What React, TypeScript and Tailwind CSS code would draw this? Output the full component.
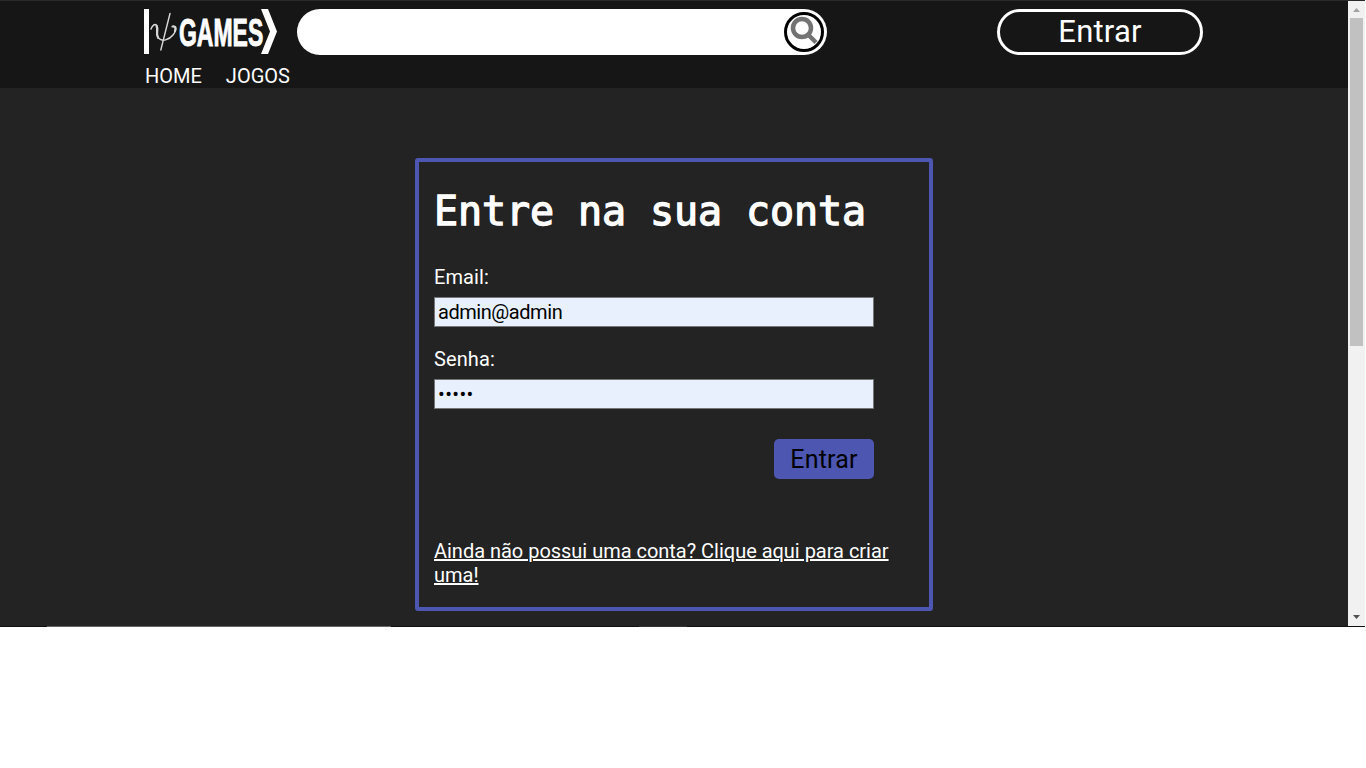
import React from "react";

function Logo() {
  return (
    <svg width="134" height="46" viewBox="0 0 134 46" className="block shrink-0 overflow-visible" aria-label="Psi Games">
      <rect x="0" y="0" width="5" height="45" fill="#fff" />
      <g fill="none" stroke="#d8d8d8" strokeLinecap="round">
        <path d="M7 20C8.500 16 11 14.500 12.800 16.500C15 19 11.500 25.500 14.500 29C18 33 25 31 29 26C31 23.500 32 20 31.500 18" strokeWidth="1.500" />
        <path d="M12.500 17C14.500 20 11.500 25 14 28.500M28.500 17.500C31.500 17 32 19 31 22" strokeWidth="2.200" />
        <path d="M26 4.500L16.800 41" strokeWidth="1.400" />
      </g>
      <text
        transform="translate(35 36.500) scale(0.605 1)"
        fill="#fff"
        stroke="#fff"
        strokeWidth="0.900"
        fontFamily="Liberation Sans, sans-serif"
        fontWeight="700"
        fontSize="38"
      >
        GAMES
      </text>
      <path d="M117 0H124L133 22.500L124 45H117L126 22.500Z" fill="#fff" />
    </svg>
  );
}

function SearchBar() {
  return (
    <div className="ml-[19px] flex h-[46px] w-[530px] items-center justify-end rounded-full bg-white pr-[3px]">
      <button className="flex size-10 items-center justify-center rounded-full border-[3px] border-black bg-white">
        <svg width="32" height="32" viewBox="0 0 32 32" fill="none" stroke="#737373">
          <circle cx="14" cy="12" r="9" strokeWidth="4.500" />
          <path d="M20 18.500L28 26.500" strokeWidth="4.500" />
        </svg>
      </button>
    </div>
  );
}

function Header() {
  return (
    <header className="h-[87px] bg-[#161616] pl-36 pt-2">
      <div className="flex items-start">
        <Logo />
        <SearchBar />
        <button className="ml-[170px] flex h-[46px] w-[206px] justify-center rounded-full border-[3px] border-white text-[31px] leading-[39px] tracking-[0.2px] text-white">
          Entrar
        </button>
      </div>
      <nav className="mt-[9px] flex gap-6 pl-px text-xl leading-6 text-white">
        <a>HOME</a>
        <a>JOGOS</a>
      </nav>
    </header>
  );
}

function Field({ label, type, value, tracking }: { label: string; type: string; value: string; tracking: string }) {
  return (
    <label className="block text-xl leading-6 tracking-[0.1px] text-white">
      {label}
      <input
        type={type}
        defaultValue={value}
        className={`mt-2 block h-[30px] w-[440px] border border-[#767676] bg-[#e8f0fe] px-[3px] text-xl text-black outline-none ${tracking}`}
      />
    </label>
  );
}

function LoginCard() {
  return (
    <section className="mt-[70px] ml-[415px] h-[453px] w-[518px] rounded-[3px] border-4 border-[#4d56b0] pl-[15px] text-white">
      <h1 className="mt-[22px] h-[54px] whitespace-nowrap font-['DejaVu_Sans_Mono',monospace] text-[40px] leading-[54px] tracking-[-0.08px] [-webkit-text-stroke:1.300px_white]">
        Entre na sua conta
      </h1>
      <form className="mt-[27px] w-[440px]">
        <Field label="Email:" type="text" value="admin@admin" tracking="tracking-[-0.450px]" />
        <div className="h-5" />
        <Field label="Senha:" type="password" value="admin" tracking="tracking-[0.400px]" />
        <div className="mt-[30px] flex justify-end">
          <button type="button" className="h-10 w-[100px] rounded-[5px] bg-[#4d56b0] text-[25px] leading-[42px] tracking-[0.2px] text-black">
            Entrar
          </button>
        </div>
      </form>
      <a className="mt-[60px] block w-[480px] text-xl leading-6 tracking-[-0.020px] underline decoration-2 underline-offset-[1px]">
        Ainda não possui uma conta? Clique aqui para criar
        <br />
        uma!
      </a>
    </section>
  );
}

function Scrollbar() {
  return (
    <div className="flex w-[17px] shrink-0 flex-col items-center bg-[#f1f1f1]">
      <svg width="17" height="17" viewBox="0 0 17 17">
        <path d="M5 11L8.500 7L12 11Z" fill="#a3a3a3" />
      </svg>
      <div className="h-[328px] w-[13px] bg-[#c1c1c1]" />
      <svg width="17" height="17" viewBox="0 0 17 17" className="mt-auto">
        <path d="M5 6L8.500 10L12 6Z" fill="#505050" />
      </svg>
    </div>
  );
}

export default function App() {
  return (
    <div className="h-[768px] overflow-hidden bg-white font-['Roboto',sans-serif]">
      <div className="w-[1365px]">
        <div className="h-px bg-[#2a2a2a]" />
        <div className="flex h-[625px]">
          <div className="min-w-0 flex-1 bg-[#232323]">
            <Header />
            <LoginCard />
          </div>
          <Scrollbar />
        </div>
        <div className="flex h-px bg-[#101010]">
          <div className="ml-[47px] w-[344px] bg-[#666]" />
          <div className="ml-[248px] w-[48px] bg-[#333]" />
        </div>
      </div>
    </div>
  );
}
